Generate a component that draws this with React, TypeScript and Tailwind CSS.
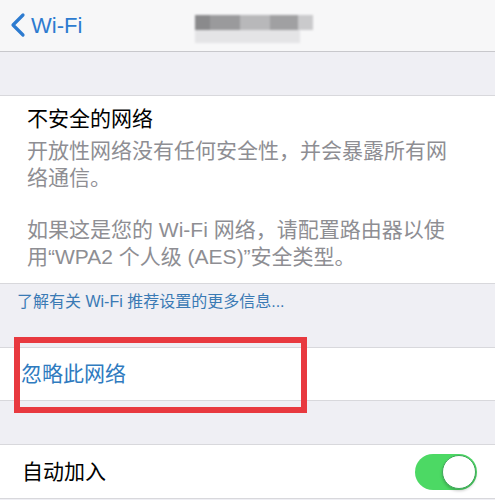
import React from "react";

const font = { fontFamily: '"Liberation Sans", "Noto Sans CJK SC", sans-serif' };

function Toggle() {
  return (
    <div className="relative h-[36px] w-[62px] rounded-full bg-[#4cd964]">
      <div className="absolute right-[1px] top-[1px] h-[34px] w-[34px] rounded-full border border-[#3fa85a] bg-white shadow-[0_2px_3px_rgba(0,0,0,0.2)]" />
    </div>
  );
}

export default function App() {
  return (
    <div className="relative h-[500px] w-[495px] overflow-hidden bg-[#efeff4]" style={font}>
      {/* Nav bar */}
      <div className="relative flex h-[52px] items-center border-b border-[#c8c8cc] bg-[#f7f7f8]">
        <div className="flex items-center pl-[9px] text-[#2d7bd0]">
          <svg width="18" height="26" viewBox="0 0 18 26" className="mt-[-1px]">
            <path d="M14 3 L4 13 L14 23" fill="none" stroke="currentColor" strokeWidth="3.2" strokeLinecap="round" strokeLinejoin="round" />
          </svg>
          <span className="ml-[4px] text-[22px] leading-none">Wi-Fi</span>
        </div>
        {/* blurred title */}
        <div className="absolute left-[195px] top-[15px] flex flex-col blur-[1px]">
          <div className="flex h-[15px]">
            <div className="w-[15px] bg-[#8a8a8c]" />
            <div className="w-[30px] bg-[#9a9a9c]" />
            <div className="w-[30px] bg-[#b8b8ba]" />
            <div className="w-[28px] bg-[#a0a0a2]" />
            <div className="w-[15px] bg-[#cacacc]" />
          </div>
          <div className="h-[13px] w-[105px] bg-[#e4e4e6]" />
        </div>
      </div>

      <div className="h-[43px]" />

      {/* Insecure network section */}
      <div className="border-y border-[#d8d8dc] bg-white pb-[13px] pl-[27px] pt-[8px]">
        <div className="text-[21px] leading-[30px] text-black">不安全的网络</div>
        <div className="mt-[3px] text-[21px] leading-[27px] text-[#8e8e93]">
          <div>开放性网络没有任何安全性，并会暴露所有网</div>
          <div>络通信。</div>
          <div className="h-[25px]" />
          <div>如果这是您的 Wi-Fi 网络，请配置路由器以使</div>
          <div>用“WPA2 个人级 (AES)”安全类型。</div>
        </div>
      </div>

      <div className="h-[63px] pl-[17px] pt-[7px] text-[16px] leading-[22px] text-[#3a7ab4]">
        了解有关 Wi-Fi 推荐设置的更多信息...
      </div>

      {/* Forget network */}
      <div className="flex h-[54px] items-center border-y border-[#d8d8dc] bg-white pl-[21px] text-[21px] text-[#2f7bbf]">
        忽略此网络
      </div>

      <div className="h-[43px]" />

      {/* Auto join */}
      <div className="flex h-[55px] items-center justify-between border-y border-[#d8d8dc] bg-white pl-[22px] pr-[18px]">
        <span className="text-[21px] text-black">自动加入</span>
        <Toggle />
      </div>

      {/* red annotation box */}
      <div className="absolute left-[14px] top-[337px] h-[76px] w-[293px] border-[6px] border-[#e8393f]" />
    </div>
  );
}
